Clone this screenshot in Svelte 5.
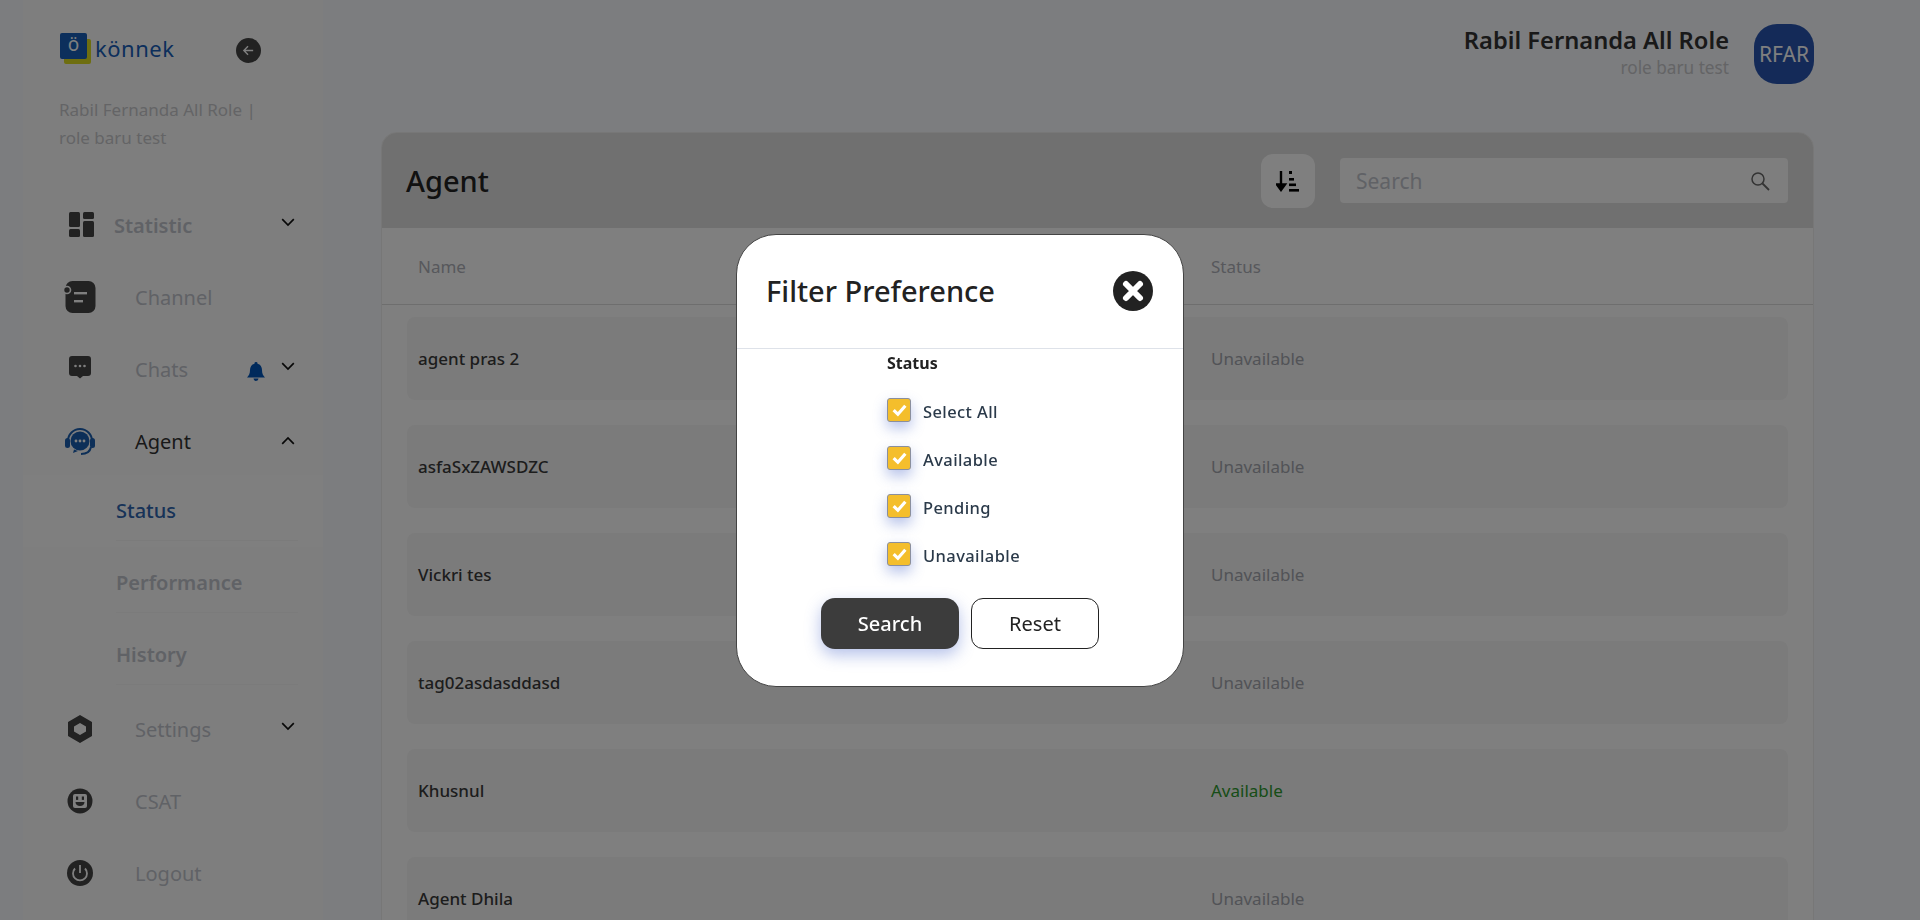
<script>
  const menuTop = [
    { label: 'Statistic', icon: 'statistic', chevron: 'down', short: true },
    { label: 'Channel', icon: 'channel' },
    { label: 'Chats', icon: 'chats', chevron: 'down', bell: true }
  ];
  const subMenu = ['Status', 'Performance', 'History'];
  const menuBottom = [
    { label: 'Settings', icon: 'settings', chevron: 'down' },
    { label: 'CSAT', icon: 'csat' },
    { label: 'Logout', icon: 'logout' }
  ];
  const agents = [
    { name: 'agent pras 2', status: 'Unavailable' },
    { name: 'asfaSxZAWSDZC', status: 'Unavailable' },
    { name: 'Vickri tes', status: 'Unavailable' },
    { name: 'tag02asdasddasd', status: 'Unavailable' },
    { name: 'Khusnul', status: 'Available' },
    { name: 'Agent Dhila', status: 'Unavailable' }
  ];
  const filters = ['Select All', 'Available', 'Pending', 'Unavailable'];
</script>

{#snippet chevron(dir)}
  <svg class="chev" class:up={dir === 'up'} viewBox="0 0 14 9" width="14" height="9">
    {#if dir === 'down'}
      <path d="M1.2 1.2 7 7l5.8-5.8" fill="none" stroke="#111" stroke-width="1.7" />
    {:else}
      <path d="M1.2 7.8 7 2l5.8 5.8" fill="none" stroke="#111" stroke-width="1.7" />
    {/if}
  </svg>
{/snippet}

{#snippet menuIcon(name)}
  <svg class="icon" viewBox="0 0 32 32" width="32" height="32">
    {#if name === 'statistic'}
      <rect x="5" y="3" width="11" height="15" rx="1.5" fill="#444" />
      <rect x="19" y="3" width="11" height="7" rx="1.5" fill="#444" />
      <rect x="5" y="20" width="11" height="8" rx="1.5" fill="#444" />
      <rect x="19" y="12" width="11" height="16" rx="1.5" fill="#444" />
    {:else if name === 'channel'}
      <rect x="1.500" y="0" width="30" height="32" rx="7" fill="#444" />
      <circle cx="3" cy="9" r="3.500" fill="#444" stroke="#fff" stroke-width="1.600" />
      <rect x="10" y="11" width="13" height="2.400" fill="#fff" />
      <rect x="10" y="19" width="9" height="2.400" fill="#fff" />
    {:else if name === 'chats'}
      <path d="M8 3h16a3 3 0 0 1 3 3v14a3 3 0 0 1-3 3h-5l-3 2.600-3-2.600H8a3 3 0 0 1-3-3V6a3 3 0 0 1 3-3z" fill="#444" />
      <circle cx="11.500" cy="13" r="1.300" fill="#fff" /><circle cx="16" cy="13" r="1.300" fill="#fff" /><circle cx="20.500" cy="13" r="1.300" fill="#fff" />
    {:else if name === 'agent'}
      <path d="M4 16a12 12 0 0 1 24 0" fill="none" stroke="#1b5fb0" stroke-width="2" />
      <rect x="1" y="13" width="5" height="10" rx="2.500" fill="#1b5fb0" />
      <rect x="26" y="13" width="5" height="10" rx="2.500" fill="#1b5fb0" />
      <circle cx="16" cy="16" r="9.500" fill="#1b5fb0" />
      <path d="M10 24.500 9 28l5-2" fill="#1b5fb0" />
      <path d="M27 22c-1 5-5 7-10 7" fill="none" stroke="#1b5fb0" stroke-width="2" />
      <circle cx="12" cy="16" r="1.400" fill="#fff" /><circle cx="16" cy="16" r="1.400" fill="#fff" /><circle cx="20" cy="16" r="1.400" fill="#fff" />
    {:else if name === 'settings'}
      <path fill-rule="evenodd" d="M16 2 28 9v14l-12 7-12-7V9zm0 8-6 3.500v5l6 3.500 6-3.500v-5z" fill="#444" />
    {:else if name === 'csat'}
      <circle cx="16" cy="16" r="12.500" fill="#444" />
      <rect x="9" y="9" width="14" height="14" rx="2" fill="#fff" />
      <rect x="12" y="11.500" width="2.200" height="3.400" fill="#444" /><rect x="17.800" y="11.500" width="2.200" height="3.400" fill="#444" />
      <path d="M11.500 17h9c0 2.400-2 4-4.500 4s-4.500-1.600-4.500-4z" fill="#444" />
    {:else if name === 'logout'}
      <circle cx="16" cy="16" r="13" fill="#444" />
      <path d="M11 11.500a7 7 0 1 0 10 0" fill="none" stroke="#fff" stroke-width="1.800" />
      <path d="M16 8v8" stroke="#fff" stroke-width="1.800" />
    {/if}
  </svg>
{/snippet}

<div class="page">
  <aside class="sidebar">
    <div class="brand">
      <div class="logo">
        <span class="logo-back"></span>
        <span class="logo-mark">ö</span>
      </div>
      <span class="logo-text">könnek</span>
      <button class="collapse" aria-label="collapse">
        <svg viewBox="0 0 14 14" width="13" height="13"><path d="M12 7H2M6.500 2.500 2 7l4.500 4.500" fill="none" stroke="#fff" stroke-width="1.500" /></svg>
      </button>
    </div>
    <p class="who">Rabil Fernanda All Role | role baru test</p>

    <nav>
      {#each menuTop as item}
        <div class="item" class:short={item.short}>
          <span class="icon-slot">{@render menuIcon(item.icon)}</span>
          <span class="label">{item.label}</span>
          {#if item.bell}
            <svg class="bell" viewBox="0 0 18 20" width="18" height="20"><path d="M9 0a1.500 1.500 0 0 1 1.500 1.700C13.500 2.400 15 5 15 8c0 4 1.200 5.500 3 7.500H0C1.800 13.500 3 12 3 8c0-3 1.500-5.600 4.500-6.300A1.500 1.500 0 0 1 9 0zM6.500 16.500h5a2.500 2.500 0 0 1-5 0z" fill="#0054b8" /></svg>
          {/if}
          {#if item.chevron}{@render chevron(item.chevron)}{/if}
        </div>
      {/each}

      <div class="item active">
        <span class="icon-slot">{@render menuIcon('agent')}</span>
        <span class="label">Agent</span>
        {@render chevron('up')}
      </div>

      <div class="sub">
        {#each subMenu as s, i}
          <div class="sub-item" class:current={i === 0}><span>{s}</span></div>
        {/each}
      </div>

      {#each menuBottom as item}
        <div class="item">
          <span class="icon-slot">{@render menuIcon(item.icon)}</span>
          <span class="label">{item.label}</span>
          {#if item.chevron}{@render chevron(item.chevron)}{/if}
        </div>
      {/each}
    </nav>
  </aside>

  <main class="main">
    <header class="topbar">
      <div class="user">
        <div class="user-name">Rabil Fernanda All Role</div>
        <div class="user-role">role baru test</div>
      </div>
      <div class="avatar">RFAR</div>
    </header>

    <section class="panel">
      <div class="panel-head">
        <h1>Agent</h1>
        <button class="sort" aria-label="sort">
          <svg viewBox="0 0 24 22" width="24" height="22">
            <path d="M5 1v18M1 14.500 5 20l4-5.500z" stroke="#000" stroke-width="2.400" fill="#000" />
            <rect x="13" y="1" width="3" height="3" fill="#000" />
            <rect x="13" y="8" width="5" height="2.600" fill="#000" />
            <rect x="13" y="13.500" width="7" height="2.600" fill="#000" />
            <rect x="13" y="19" width="10" height="2.600" fill="#000" />
          </svg>
        </button>
        <div class="search">
          <span>Search</span>
          <svg viewBox="0 0 20 20" width="20" height="20"><circle cx="8" cy="8" r="6" fill="none" stroke="#666" stroke-width="1.500" /><path d="m12.500 12.500 6.500 6.500" stroke="#666" stroke-width="1.800" /></svg>
        </div>
      </div>
      <div class="thead">
        <span class="col-name">Name</span>
        <span class="col-status">Status</span>
      </div>
      <div class="rows">
        {#each agents as a}
          <div class="row">
            <span class="col-name">{a.name}</span>
            <span class="col-status" class:on={a.status === 'Available'}>{a.status}</span>
          </div>
        {/each}
      </div>
    </section>
  </main>
</div>

<div class="overlay">
  <div class="modal">
    <div class="modal-head">
      <h2>Filter Preference</h2>
      <button class="close" aria-label="close">
        <svg viewBox="0 0 40 40" width="40" height="40">
          <circle cx="20" cy="20" r="20" fill="#222" />
          <path d="M13 13l14 14M27 13 13 27" stroke="#fff" stroke-width="6" stroke-linecap="round" />
        </svg>
      </button>
    </div>
    <div class="modal-body">
      <div class="group-title">Status</div>
      {#each filters as f}
        <label class="check">
          <span class="box">
            <svg viewBox="0 0 16 16" width="17" height="17"><path d="M2.500 8.500 6.500 12.500 13.500 4.500" fill="none" stroke="#fff" stroke-width="3" /></svg>
          </span>
          <span class="check-text">{f}</span>
        </label>
      {/each}
    </div>
    <div class="actions">
      <button class="btn-search">Search</button>
      <button class="btn-reset">Reset</button>
    </div>
  </div>
</div>

<style>
  :global(body) {
    background: #f8fafe;
    overflow: hidden;
    font-family: 'Noto Sans', 'Open Sans', sans-serif;
  }

  .page {
    display: flex;
    height: 920px;
    overflow: hidden;
  }

  .sidebar {
    width: 300px;
    margin-left: 23px;
    flex-shrink: 0;
    background: #fdfdfd;
    padding-top: 32px;
    box-sizing: border-box;
  }

  .brand {
    display: flex;
    align-items: center;
    padding-left: 37px;
    height: 32px;
  }

  .logo {
    position: relative;
    width: 31px;
    height: 31px;
    margin-right: 4px;
  }

  .logo-back {
    position: absolute;
    left: 4px;
    top: 6px;
    width: 27px;
    height: 25px;
    background: #dcdc20;
    border-radius: 2px;
  }

  .logo-mark {
    position: absolute;
    left: 0;
    top: 0;
    width: 27px;
    height: 26px;
    background: #185eb8;
    border-radius: 2px;
    color: #fff;
    font-size: 19px;
    line-height: 23px;
    text-align: center;
  }

  .logo-text {
    font-size: 22px;
    color: #185eb8;
    letter-spacing: 0.5px;
    margin-top: -1px;
    width: 141px;
  }

  .collapse {
    width: 25px;
    height: 25px;
    border-radius: 50%;
    border: none;
    padding: 0;
    background: #444;
    display: flex;
    align-items: center;
    justify-content: center;
    margin-top: 5px;
  }

  .who {
    margin: 32px 0 0;
    padding: 0 60px 0 36px;
    font-size: 17px;
    line-height: 28px;
    color: #c8c9cc;
  }

  nav {
    margin-top: 37px;
  }

  .item {
    display: flex;
    align-items: center;
    height: 72px;
    padding: 0 28px 0 41px;
    color: #c1c4cc;
    font-size: 20px;
  }

  .item .label {
    margin-left: 39px;
    flex: 1;
  }

  .item.short .label {
    margin-left: 18px;
    font-weight: 600;
  }

  .item.active .label {
    color: #333;
  }

  .icon-slot {
    display: flex;
    width: 32px;
    height: 32px;
  }

  .bell {
    margin-right: 16px;
    margin-top: 5px;
  }

  .chev {
    margin-top: -6px;
  }

  .chev.up {
    margin-top: -2px;
  }

  .sub {
    margin: -2px 0 2px;
  }

  .sub-item {
    height: 72px;
    margin-right: 0;
    padding-left: 93px;
    box-sizing: border-box;
    display: flex;
    align-items: center;
    font-size: 20px;
    font-weight: 600;
    color: #c1c4cc;
  }

  .sub-item span {
    flex: 0 0 182px;
    height: 58px;
    line-height: 58px;
    border-bottom: 1px solid #f6f6f6;
  }

  .sub-item.current {
    background: #fff;
    color: #2f66b0;
    font-weight: 500;
  }

  .main {
    flex: 1;
    padding: 24px 106px 0 58px;
    min-width: 0;
  }

  .topbar {
    display: flex;
    justify-content: flex-end;
    align-items: flex-start;
    height: 108px;
  }

  .user {
    text-align: right;
    margin-right: 25px;
  }

  .user-name {
    font-size: 23.700px;
    font-weight: 600;
    line-height: 32px;
    color: #333;
  }

  .user-role {
    font-size: 17.200px;
    line-height: 24px;
    color: #c8c9cc;
  }

  .avatar {
    width: 60px;
    height: 60px;
    border-radius: 23px;
    background: #2855b0;
    color: #fff;
    font-size: 21px;
    display: flex;
    align-items: center;
    justify-content: center;
  }

  .panel {
    background: #fff;
    border: 1px solid #eee;
    border-radius: 16px 16px 0 0;
    overflow: hidden;
  }

  .panel-head {
    display: flex;
    align-items: center;
    height: 95px;
    background: #e0e0e0;
    padding: 0 25px 0 24px;
  }

  h1 {
    margin: 0;
    flex: 1;
    font-size: 29px;
    font-weight: 500;
    color: #222;
  }

  .sort {
    width: 54px;
    height: 54px;
    border: none;
    border-radius: 12px;
    background: #fefefe;
    margin-right: 25px;
    padding: 0;
    display: flex;
    align-items: center;
    justify-content: center;
  }

  .search {
    width: 448px;
    height: 45px;
    box-sizing: border-box;
    background: #fcfcfc;
    border-radius: 4px;
    padding: 0 18px 0 16px;
    display: flex;
    align-items: center;
    justify-content: space-between;
    font-size: 21px;
    color: #c1c4cc;
  }

  .thead {
    display: flex;
    align-items: center;
    height: 76px;
    padding: 0 36px;
    border-bottom: 1px solid #ddd;
    font-size: 17px;
    color: #aeb0b8;
  }

  .col-name {
    width: 793px;
  }

  .rows {
    padding: 12px 25px 0;
  }

  .row {
    display: flex;
    align-items: center;
    height: 83px;
    margin-bottom: 25px;
    padding: 0 11px;
    border-radius: 8px;
    background: #f6f6f6;
    font-size: 17px;
    font-weight: 500;
    color: #3a3a3a;
  }

  .row .col-status {
    font-size: 17px;
    font-weight: 400;
    color: #a4a6ae;
  }

  .row .col-status.on {
    color: #2e9a2e;
  }

  .overlay {
    position: fixed;
    inset: 0;
    background: rgba(0, 0, 0, 0.5);
    display: flex;
    align-items: center;
    justify-content: center;
  }

  .modal {
    width: 448px;
    height: 453px;
    box-sizing: border-box;
    background: #fff;
    border: 1px solid #444;
    border-radius: 40px;
    display: flex;
    flex-direction: column;
  }

  .modal-head {
    height: 114px;
    flex-shrink: 0;
    box-sizing: border-box;
    border-bottom: 1px solid #dee2e9;
    display: flex;
    justify-content: space-between;
    padding: 36px 30px 0 29px;
  }

  h2 {
    margin: 0;
    font-size: 29px;
    font-weight: 500;
    line-height: 40px;
    color: #222;
  }

  .close {
    border: none;
    background: none;
    padding: 0;
    width: 40px;
    height: 40px;
  }

  .modal-body {
    padding: 3px 0 0 150px;
  }

  .group-title {
    font-size: 16px;
    font-weight: 700;
    line-height: 22px;
    color: #222;
    margin-bottom: 24px;
  }

  .check {
    display: flex;
    align-items: center;
    gap: 12px;
    height: 24px;
    margin-bottom: 24px;
    font-size: 16.500px;
    letter-spacing: 0.4px;
    font-weight: 500;
    color: #2b3a4a;
  }

  .check-text {
    padding-top: 4px;
  }

  .box {
    width: 24px;
    height: 24px;
    box-sizing: border-box;
    background: #f4be2c;
    border: 1px solid #8a8f9e;
    border-radius: 3px;
    box-shadow: 0 6px 14px rgba(70, 100, 200, 0.4);
    display: flex;
    align-items: center;
    justify-content: center;
  }

  .actions {
    display: flex;
    gap: 12px;
    padding-left: 84px;
    margin-top: 8px;
  }

  .actions button {
    height: 51px;
    font-family: inherit;
    font-size: 20px;
  }

  .btn-search {
    width: 138px;
    border: none;
    border-radius: 14px;
    background: #3c3c3c;
    color: #fff;
    font-weight: 500;
    box-shadow: 0 6px 16px rgba(70, 100, 200, 0.4);
  }

  .btn-reset {
    width: 128px;
    border: 1px solid #222;
    border-radius: 12px;
    background: #fff;
    color: #222;
  }
</style>
